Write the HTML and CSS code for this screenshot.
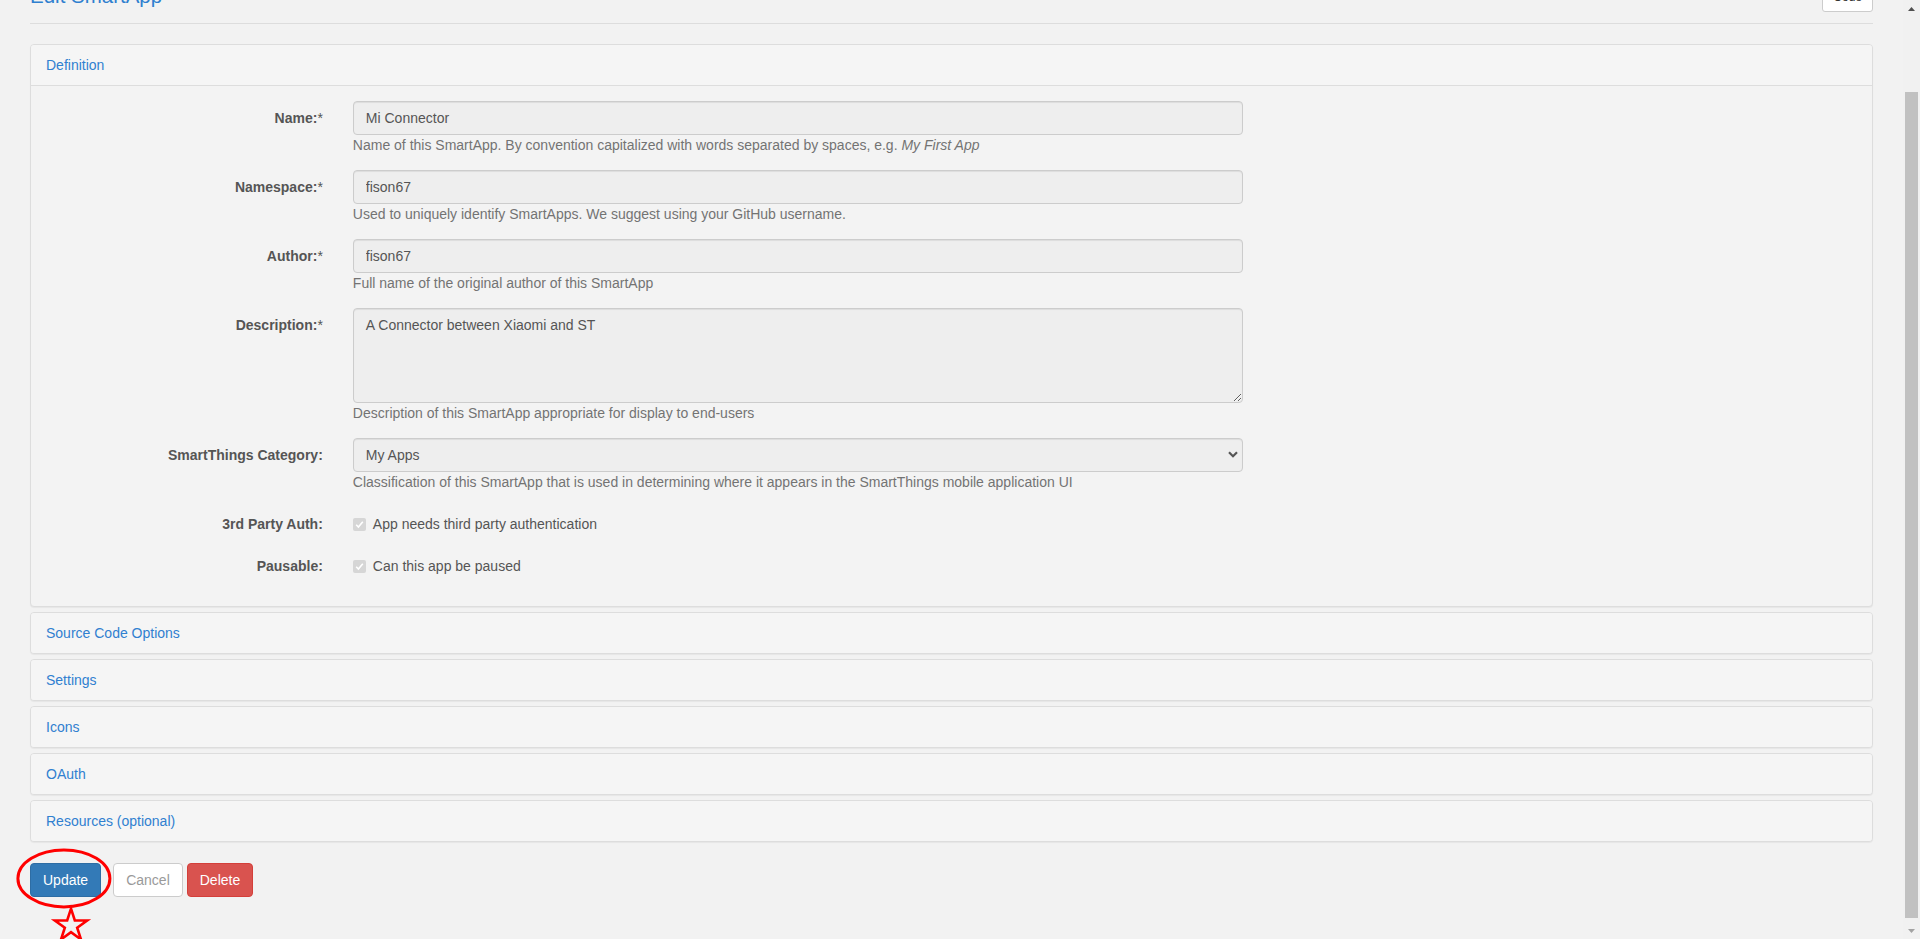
FILE: index.html
```html
<!DOCTYPE html>
<html lang="en">
<head>
<meta charset="utf-8">
<title>Edit SmartApp</title>
<link rel="stylesheet" href="styles.css">
</head>
<body>
<div class="layout">
  <div class="main">
    <div class="page-header">
      <h1 class="title">Edit SmartApp</h1>
      <button class="btn btn-sm btn-default btn-code" type="button">Code</button>
    </div>

    <div class="panel-group">
      <div class="panel open">
        <div class="panel-heading"><a class="panel-title" href="#">Definition</a></div>
        <div class="panel-body">
          <form class="form-horizontal">
            <div class="form-group">
              <label class="control-label">Name:<span class="req">*</span></label>
              <div class="controls">
                <input class="form-control" type="text" value="Mi Connector" readonly>
                <p class="help-block">Name of this SmartApp. By convention capitalized with words separated by spaces, e.g. <em>My First App</em></p>
              </div>
            </div>
            <div class="form-group">
              <label class="control-label">Namespace:<span class="req">*</span></label>
              <div class="controls">
                <input class="form-control" type="text" value="fison67" readonly>
                <p class="help-block">Used to uniquely identify SmartApps. We suggest using your GitHub username.</p>
              </div>
            </div>
            <div class="form-group">
              <label class="control-label">Author:<span class="req">*</span></label>
              <div class="controls">
                <input class="form-control" type="text" value="fison67" readonly>
                <p class="help-block">Full name of the original author of this SmartApp</p>
              </div>
            </div>
            <div class="form-group">
              <label class="control-label">Description:<span class="req">*</span></label>
              <div class="controls">
                <textarea class="form-control textarea" rows="4" readonly>A Connector between Xiaomi and ST</textarea>
                <p class="help-block">Description of this SmartApp appropriate for display to end-users</p>
              </div>
            </div>
            <div class="form-group">
              <label class="control-label">SmartThings Category:</label>
              <div class="controls">
                <div class="select-wrap">
                  <select class="form-control select">
                    <option>My Apps</option>
                  </select>
                  <svg class="chev" viewBox="0 0 10 7" width="10" height="7" aria-hidden="true"><path d="M1 1.2 L5 5.2 L9 1.2" fill="none" stroke="#555" stroke-width="2.2"/></svg>
                </div>
                <p class="help-block">Classification of this SmartApp that is used in determining where it appears in the SmartThings mobile application UI</p>
              </div>
            </div>
            <div class="form-group">
              <label class="control-label">3rd Party Auth:</label>
              <div class="controls">
                <div class="checkbox">
                  <span class="check"><svg viewBox="0 0 13 13" width="13" height="13" aria-hidden="true"><path d="M3.2 6.8 L5.4 9 L9.8 3.8" fill="none" stroke="#fff" stroke-width="1.6"/></svg></span>
                  <span>App needs third party authentication</span>
                </div>
              </div>
            </div>
            <div class="form-group">
              <label class="control-label">Pausable:</label>
              <div class="controls">
                <div class="checkbox">
                  <span class="check"><svg viewBox="0 0 13 13" width="13" height="13" aria-hidden="true"><path d="M3.2 6.8 L5.4 9 L9.8 3.8" fill="none" stroke="#fff" stroke-width="1.6"/></svg></span>
                  <span>Can this app be paused</span>
                </div>
              </div>
            </div>
          </form>
        </div>
      </div>
      <div class="panel"><div class="panel-heading"><a class="panel-title" href="#">Source Code Options</a></div></div>
      <div class="panel"><div class="panel-heading"><a class="panel-title" href="#">Settings</a></div></div>
      <div class="panel"><div class="panel-heading"><a class="panel-title" href="#">Icons</a></div></div>
      <div class="panel"><div class="panel-heading"><a class="panel-title" href="#">OAuth</a></div></div>
      <div class="panel"><div class="panel-heading"><a class="panel-title" href="#">Resources (optional)</a></div></div>
    </div>

    <div class="actions">
      <button class="btn btn-primary btn-update" type="button">Update</button>
      <button class="btn btn-default btn-cancel" type="button">Cancel</button>
      <button class="btn btn-danger" type="button">Delete</button>
      <svg class="annotation" viewBox="0 0 100 96" width="100" height="96" aria-hidden="true">
        <ellipse cx="49.9" cy="31.4" rx="46" ry="28.5" fill="none" stroke="#f00" stroke-width="3"/>
        <polygon points="57,61.7 60.82,73.45 73.17,73.45 63.17,80.7 66.99,92.45 57,85.19 47.01,92.45 50.83,80.7 40.83,73.45 53.18,73.45" fill="none" stroke="#f00" stroke-width="2.6" stroke-linejoin="miter"/>
      </svg>
    </div>
  </div>

  <div class="scrollbar" aria-hidden="true">
    <div class="sb-btn"><svg viewBox="0 0 7 4" width="7" height="4"><path d="M0 4 L3.5 0 L7 4 Z" fill="#505050"/></svg></div>
    <div class="sb-track"><div class="sb-thumb"></div></div>
    <div class="sb-btn"><svg viewBox="0 0 7 4" width="7" height="4"><path d="M0 0 L3.5 4 L7 0 Z" fill="#a3a3a3"/></svg></div>
  </div>
</div>
</body>
</html>
```

FILE: styles.css
```css
html, body {
  margin: 0;
  padding: 0;
}

body {
  background: #f2f2f2;
  font-family: "Liberation Sans", Arial, sans-serif;
  font-size: 14px;
  line-height: 20px;
  color: #333;
}

.layout {
  display: flex;
  height: 939px;
  overflow: hidden;
}

.main {
  flex: 1;
  min-width: 0;
  padding: 0 30px;
}

/* header (page is scrolled, so it is partly cut off) */
.page-header {
  display: flex;
  justify-content: space-between;
  align-items: flex-end;
  margin-top: -18px;
  padding-bottom: 11px;
  border-bottom: 1px solid #dddddd;
}

.title {
  margin: 0 0 5px;
  font-size: 20.5px;
  line-height: 23px;
  font-weight: normal;
  color: #2f7fcf;
}

/* buttons */
.btn {
  display: inline-block;
  box-sizing: border-box;
  font-family: "Liberation Sans", Arial, sans-serif;
  font-size: 14px;
  line-height: 20px;
  padding: 6px 12px;
  border: 1px solid transparent;
  border-radius: 4px;
  cursor: pointer;
  white-space: nowrap;
}

.btn-sm {
  font-size: 12px;
  line-height: 18px;
  padding: 5px 10px;
  border-radius: 3px;
}

.btn-default {
  background: #fff;
  border-color: #ccc;
  color: #333;
}

.btn-primary {
  background: #337ab7;
  border-color: #2e6da4;
  color: #fff;
}

.btn-danger {
  background: #d9534f;
  border-color: #d43f3a;
  color: #fff;
}

.btn-cancel {
  color: #9a9a9a;
}

/* panels */
.panel-group {
  display: flex;
  flex-direction: column;
  gap: 5px;
  margin: 20px 0 21px;
}

.panel {
  border: 1px solid #dddddd;
  border-radius: 4px;
  background: #f3f3f3;
  box-shadow: 0 1px 1px rgba(0, 0, 0, 0.05);
}

.panel-heading {
  padding: 10px 15px;
  background: #f5f5f5;
  border-radius: 3px;
}

.panel.open .panel-heading {
  border-bottom: 1px solid #dddddd;
  border-radius: 3px 3px 0 0;
}

.panel-title {
  color: #3080d0;
  text-decoration: none;
  font-size: 14px;
}

.panel-body {
  padding: 15px 0;
}

/* form */
.form-horizontal {
  margin: 0;
}

.form-group {
  display: grid;
  grid-template-columns: 16.6667% 50%;
  margin-bottom: 15px;
}

.control-label {
  padding: 7px 15px 0;
  text-align: right;
  font-weight: bold;
  color: #555;
}

.req {
  font-weight: normal;
}

.controls {
  padding: 0 15px;
  min-width: 0;
}

.form-control {
  display: block;
  width: 100%;
  box-sizing: border-box;
  height: 34px;
  margin: 0;
  padding: 6px 12px;
  font-family: "Liberation Sans", Arial, sans-serif;
  font-size: 14px;
  line-height: 20px;
  color: #555;
  background: #eeeeee;
  border: 1px solid #cccccc;
  border-radius: 4px;
  box-shadow: inset 0 1px 1px rgba(0, 0, 0, 0.075);
  outline: none;
}

.textarea {
  height: 95px;
  resize: vertical;
}

.select-wrap {
  position: relative;
}

.select {
  appearance: none;
  -webkit-appearance: none;
}

.chev {
  position: absolute;
  right: 5px;
  top: 13px;
  pointer-events: none;
}

.help-block {
  margin: 0;
  color: #737373;
}

.checkbox {
  display: flex;
  align-items: center;
  gap: 7px;
  padding-top: 7px;
  min-height: 20px;
  color: #555;
}

.check {
  display: flex;
  width: 13px;
  height: 13px;
  border-radius: 2px;
  background: #d6d6d6;
  flex: none;
}

/* action buttons */
.actions {
  position: relative;
  display: flex;
  align-items: flex-start;
}

.btn-update {
  margin-right: 12px;
}

.btn-cancel {
  margin-right: 4px;
}

.annotation {
  position: absolute;
  left: -16px;
  top: -16px;
  overflow: visible;
  pointer-events: none;
}

/* fake browser scrollbar */
.scrollbar {
  flex: none;
  width: 17px;
  background: #f1f1f1;
  display: flex;
  flex-direction: column;
}

.sb-btn {
  height: 17px;
  flex: none;
  display: flex;
  align-items: center;
  justify-content: center;
}

.sb-track {
  flex: 1;
  padding: 0 2px;
}

.sb-thumb {
  margin-top: 75px;
  height: 826px;
  background: #c1c1c1;
}
```
